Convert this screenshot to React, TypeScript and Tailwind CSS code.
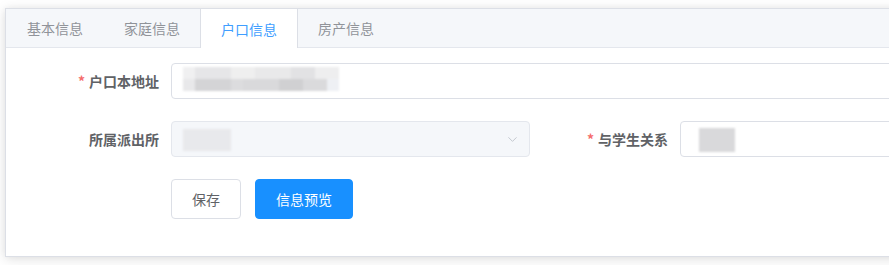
import { ChevronDown } from 'lucide-react';

const tabs = ['基本信息', '家庭信息', '户口信息', '房产信息'];
const active = 2;

const Label = ({ text, required }: { text: string; required?: boolean }) => (
  <label className="w-[150px] shrink-0 pr-3 text-right text-sm font-bold leading-9 text-[#606266]">
    {required && <span className="mr-1 text-[#f56c6c]">*</span>}
    {text}
  </label>
);

export default function App() {
  return (
    <div
      className="h-[265px] w-full overflow-hidden bg-white pl-[5px] pt-2"
      style={{ fontFamily: '"Noto Sans CJK SC", "Noto Sans", sans-serif' }}
    >
      <div className="w-[1100px] border border-[#dcdfe6] bg-white shadow-[0_2px_12px_0_rgba(0,0,0,0.12),0_0_6px_0_rgba(0,0,0,0.04)]">
        <div className="flex h-[39px] border-b border-[#e4e7ed] bg-[#f5f7fa]">
          {tabs.map((t, i) => (
            <div
              key={t}
              className={
                i === active
                  ? 'flex h-[39px] items-center border-x border-[#dcdfe6] bg-white px-5 text-sm text-[#409eff]'
                  : 'flex h-[38px] items-center border-x border-transparent px-5 text-sm text-[#909399]'
              }
              style={i > 0 ? { marginLeft: -1 } : undefined}
            >
              {t}
            </div>
          ))}
        </div>
        <div className="p-[15px]">
          <div className="mb-[22px] flex">
            <Label text="户口本地址" required />
            <div className="relative h-9 flex-1 overflow-hidden rounded border border-[#dcdfe6] bg-white">
              <div className="absolute left-[11px] top-[3px] blur-[1px]">
                <div className="flex h-[12px]">
                  <div className="w-[12px] bg-[#f0f0f1]" />
                  <div className="w-[36px] bg-[#e6e6e8]" />
                  <div className="w-[24px] bg-[#efefef]" />
                  <div className="w-[36px] bg-[#e9e9ea]" />
                  <div className="w-[24px] bg-[#e2e2e4]" />
                  <div className="w-[24px] bg-[#eeeeef]" />
                </div>
                <div className="flex h-[12px]">
                  <div className="w-[12px] bg-[#e8e8ea]" />
                  <div className="w-[36px] bg-[#d4d4d6]" />
                  <div className="w-[12px] bg-[#dcdcde]" />
                  <div className="w-[36px] bg-[#d9d9db]" />
                  <div className="w-[24px] bg-[#d0d0d2]" />
                  <div className="w-[24px] bg-[#dadadc]" />
                  <div className="w-[12px] bg-[#eef0f4]" />
                </div>
              </div>
            </div>
          </div>
          <div className="mb-[22px] flex">
            <div className="flex w-[509px]">
              <Label text="所属派出所" />
              <div className="relative h-9 flex-1 rounded border border-[#e4e7ed] bg-[#f5f7fa]">
                <div className="absolute left-[11px] top-[7px] h-[22px] w-[48px] bg-[#e8e9ec] blur-[1px]" />
                <ChevronDown className="absolute right-[9px] top-[10px] h-[15px] w-[15px] text-[#c0c4cc]" strokeWidth={1.5} />
              </div>
            </div>
            <div className="flex w-[509px]">
              <Label text="与学生关系" required />
              <div className="relative h-9 flex-1 rounded border border-[#dcdfe6] bg-white">
                <div className="absolute left-[18px] top-[6px] h-[24px] w-[36px] bg-[#d9d9db] blur-[1px]" />
              </div>
            </div>
          </div>
          <div className="mb-[22px] flex pl-[150px]">
            <button className="h-10 rounded border border-[#dcdfe6] bg-white px-5 text-sm text-[#606266]">保存</button>
            <button className="ml-[14px] h-10 rounded border border-[#1890ff] bg-[#1890ff] px-5 text-sm text-white">
              信息预览
            </button>
          </div>
        </div>
      </div>
    </div>
  );
}
